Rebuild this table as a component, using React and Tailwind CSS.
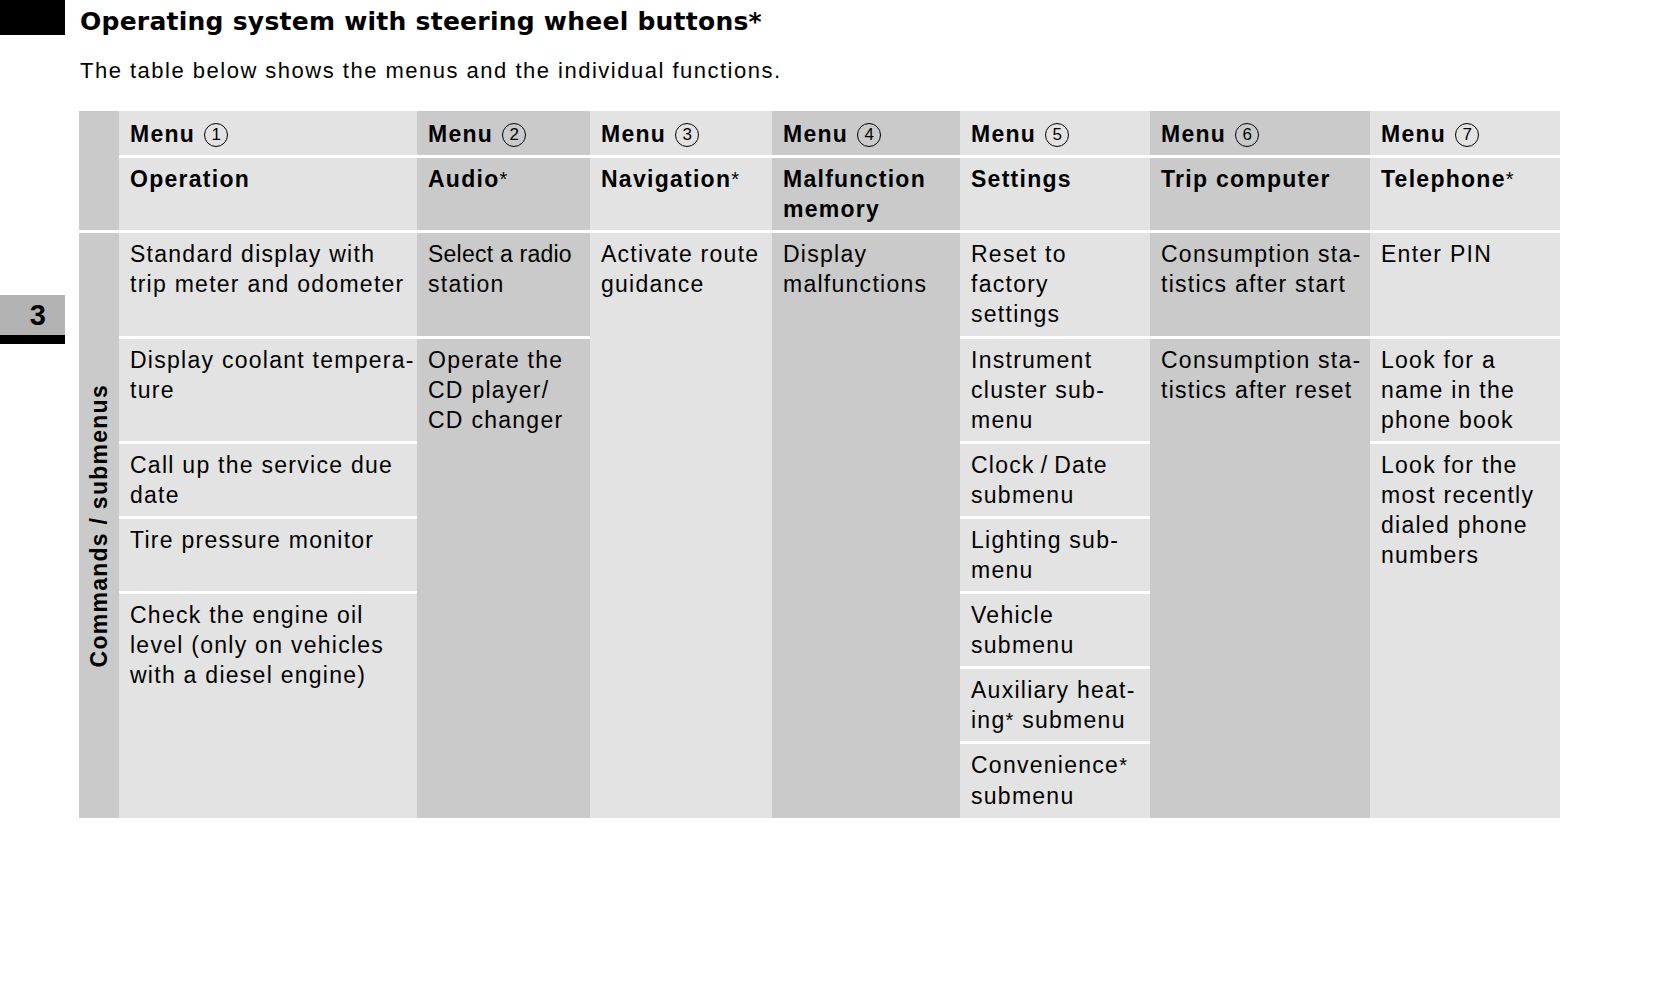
const L = 'bg-[#e3e3e3]'
const D = 'bg-[#cacaca]'

function Num({ n }) {
  return (
    <span className="relative top-[-1px] ml-[9px] inline-flex h-[24px] w-[24px] items-center justify-center rounded-full border-[1.5px] border-black align-middle text-[17px] font-normal leading-none tracking-normal">
      {n}
    </span>
  )
}

function Star() {
  return <span className="relative top-[-1px] font-normal text-[20px]">*</span>
}

function Cell({ pos, tone, children, bold, top = 'pt-[6px]' }) {
  return (
    <div className={`${pos} ${tone} ${top} ${bold ? 'font-bold' : ''} pl-[11px] leading-[30px] whitespace-nowrap`}>
      {children}
    </div>
  )
}

function Lines({ items }) {
  return items.map((t, i) => <div key={i}>{t}</div>)
}

export default function App() {
  return (
    <div className="flex h-[1000px] w-[1656px] bg-white text-black font-['Liberation_Sans',Arial,sans-serif]">
      {/* left gutter with page marks */}
      <div className="flex w-[79px] shrink-0 flex-col">
        <div className="h-[35px] w-[65px] bg-black" />
        <div className="mt-[260px] w-[65px]">
          <div className="flex h-[40px] items-center justify-end bg-[#b3b3b3] pr-[19px] text-[29px] font-bold leading-none">3</div>
          <div className="h-[9px] bg-black" />
        </div>
      </div>

      <div className="flex flex-col">
        <h1 className="pt-[7px] pl-[1px] text-[25px] leading-[30px] font-bold tracking-[0.01em] font-['DejaVu_Sans',sans-serif]">
          Operating system with steering wheel buttons*
        </h1>
        <p className="mt-[19px] pl-[1px] text-[22px] leading-[30px] tracking-[0.068em]">
          The table below shows the menus and the individual functions.
        </p>

        <div className="mt-[25px] grid grid-cols-[40px_298px_173px_182px_188px_190px_220px_190px] grid-rows-[44px_72px_103px_102px_72px_72px_72px_72px_74px] gap-y-[3px] bg-white text-[23px] tracking-[0.055em]">
          {/* side column */}
          <div className={`col-start-1 row-start-1 row-span-2 ${D}`} />
          <div className={`col-start-1 row-start-3 row-span-7 flex items-center justify-center ${D}`}>
            <span className="rotate-180 whitespace-nowrap font-bold leading-[30px] [writing-mode:vertical-rl]">
              Commands / submenus
            </span>
          </div>

          {/* header: menu numbers */}
          <Cell pos="col-start-2 row-start-1" tone={L} bold top="pt-[8px]">Menu<Num n="1" /></Cell>
          <Cell pos="col-start-3 row-start-1" tone={D} bold top="pt-[8px]">Menu<Num n="2" /></Cell>
          <Cell pos="col-start-4 row-start-1" tone={L} bold top="pt-[8px]">Menu<Num n="3" /></Cell>
          <Cell pos="col-start-5 row-start-1" tone={D} bold top="pt-[8px]">Menu<Num n="4" /></Cell>
          <Cell pos="col-start-6 row-start-1" tone={L} bold top="pt-[8px]">Menu<Num n="5" /></Cell>
          <Cell pos="col-start-7 row-start-1" tone={D} bold top="pt-[8px]">Menu<Num n="6" /></Cell>
          <Cell pos="col-start-8 row-start-1" tone={L} bold top="pt-[8px]">Menu<Num n="7" /></Cell>

          {/* header: menu names */}
          <Cell pos="col-start-2 row-start-2" tone={L} bold>Operation</Cell>
          <Cell pos="col-start-3 row-start-2" tone={D} bold>Audio<Star /></Cell>
          <Cell pos="col-start-4 row-start-2" tone={L} bold>Navigation<Star /></Cell>
          <Cell pos="col-start-5 row-start-2" tone={D} bold><Lines items={['Malfunction', 'memory']} /></Cell>
          <Cell pos="col-start-6 row-start-2" tone={L} bold>Settings</Cell>
          <Cell pos="col-start-7 row-start-2" tone={D} bold>Trip computer</Cell>
          <Cell pos="col-start-8 row-start-2" tone={L} bold>Telephone<Star /></Cell>

          {/* menu 1 */}
          <Cell pos="col-start-2 row-start-3" tone={L}><Lines items={['Standard display with', 'trip meter and odometer']} /></Cell>
          <Cell pos="col-start-2 row-start-4" tone={L}><Lines items={['Display coolant tempera-', 'ture']} /></Cell>
          <Cell pos="col-start-2 row-start-5" tone={L}><Lines items={['Call up the service due', 'date']} /></Cell>
          <Cell pos="col-start-2 row-start-6" tone={L}>Tire pressure monitor</Cell>
          <Cell pos="col-start-2 row-start-7 row-span-3" tone={L}>
            <Lines items={['Check the engine oil', 'level (only on vehicles', 'with a diesel engine)']} />
          </Cell>

          {/* menu 2 */}
          <Cell pos="col-start-3 row-start-3" tone={D}>
            <div className="tracking-[0.01em]">Select a radio</div>
            <div>station</div>
          </Cell>
          <Cell pos="col-start-3 row-start-4 row-span-6" tone={D}>
            <Lines items={['Operate the', 'CD player/', 'CD changer']} />
          </Cell>

          {/* menu 3 */}
          <Cell pos="col-start-4 row-start-3 row-span-7" tone={L}><Lines items={['Activate route', 'guidance']} /></Cell>

          {/* menu 4 */}
          <Cell pos="col-start-5 row-start-3 row-span-7" tone={D}><Lines items={['Display', 'malfunctions']} /></Cell>

          {/* menu 5 */}
          <Cell pos="col-start-6 row-start-3" tone={L}><Lines items={['Reset to', 'factory', 'settings']} /></Cell>
          <Cell pos="col-start-6 row-start-4" tone={L}><Lines items={['Instrument', 'cluster sub-', 'menu']} /></Cell>
          <Cell pos="col-start-6 row-start-5" tone={L}><Lines items={['Clock\u2009/\u2009Date', 'submenu']} /></Cell>
          <Cell pos="col-start-6 row-start-6" tone={L}><Lines items={['Lighting sub-', 'menu']} /></Cell>
          <Cell pos="col-start-6 row-start-7" tone={L}><Lines items={['Vehicle', 'submenu']} /></Cell>
          <Cell pos="col-start-6 row-start-8" tone={L}>
            <div>Auxiliary heat-</div>
            <div>ing<Star /> submenu</div>
          </Cell>
          <Cell pos="col-start-6 row-start-9" tone={L}>
            <div>Convenience<Star /></div>
            <div>submenu</div>
          </Cell>

          {/* menu 6 */}
          <Cell pos="col-start-7 row-start-3" tone={D}><Lines items={['Consumption sta-', 'tistics after start']} /></Cell>
          <Cell pos="col-start-7 row-start-4 row-span-6" tone={D}><Lines items={['Consumption sta-', 'tistics after reset']} /></Cell>

          {/* menu 7 */}
          <Cell pos="col-start-8 row-start-3" tone={L}>Enter PIN</Cell>
          <Cell pos="col-start-8 row-start-4" tone={L}><Lines items={['Look for a', 'name in the', 'phone book']} /></Cell>
          <Cell pos="col-start-8 row-start-5 row-span-5" tone={L}>
            <Lines items={['Look for the', 'most recently', 'dialed phone', 'numbers']} />
          </Cell>
        </div>
      </div>
    </div>
  )
}
